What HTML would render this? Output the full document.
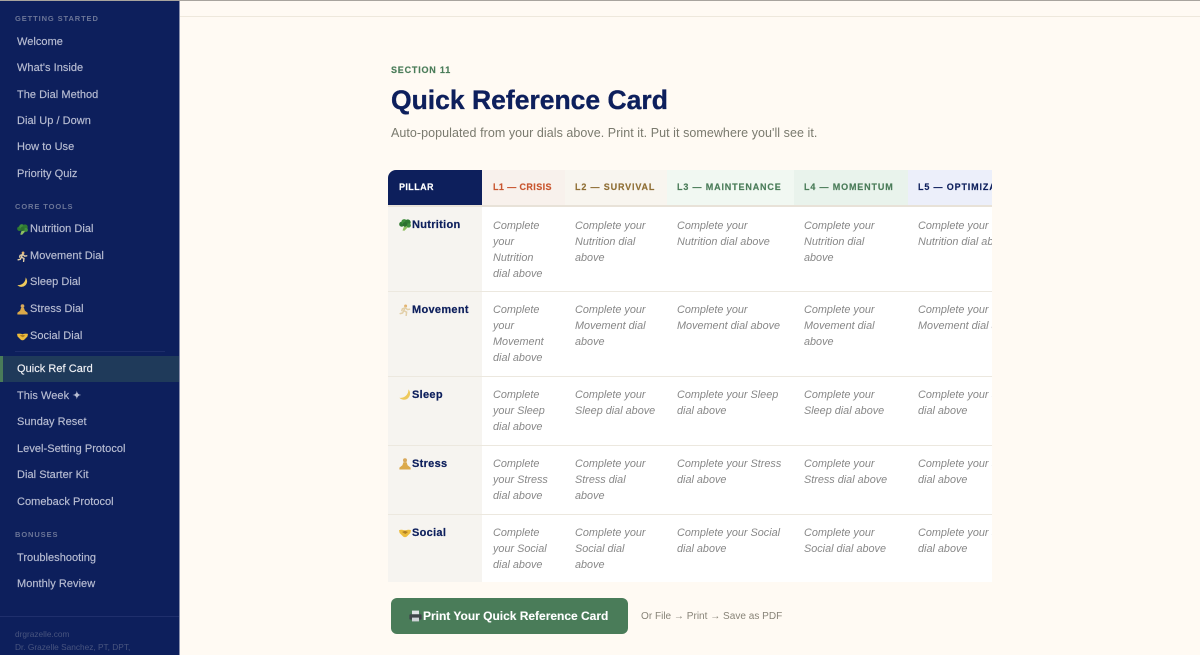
<!DOCTYPE html>
<html lang="en"><head><meta charset="utf-8"><title>Quick Reference Card</title>
<style>
*{box-sizing:border-box;margin:0;padding:0}
html,body{width:1200px;height:655px;overflow:hidden;background:#fffaf3;font-family:"Liberation Sans",Arial,sans-serif}
svg{display:block;flex:none}
.side{position:absolute;left:0;top:0;width:180px;height:655px;background:#0d1f5c;border-right:1px solid #8a90ac;overflow:hidden}
.topline{position:absolute;left:0;top:0;width:1200px;height:1px;background:#a8a49e}
.topline2{position:absolute;left:180px;top:16px;width:1020px;height:1px;background:#eee8dc}
.lab{position:absolute;left:15px;font-size:7.5px;font-weight:700;letter-spacing:.9px;color:#6b7597;line-height:10px;white-space:nowrap}
.it{position:absolute;left:17px;font-size:11px;letter-spacing:.04px;color:#b9bed3;line-height:14px;white-space:nowrap;display:flex;align-items:center;-webkit-text-stroke:.15px #b9bed3}
.it svg{margin-right:2px}
.active{position:absolute;left:0;top:356px;width:179px;height:26px;background:#1f3a5a;border-left:3px solid #4a7c59}
.divd{position:absolute;left:15px;top:351px;width:150px;height:1px;background:#1d2d6a}
.fb{position:absolute;left:0;top:616px;width:179px;height:1px;background:#1f2f6c}
.ft{position:absolute;left:15px;font-size:8.3px;color:#49557f;line-height:12px;white-space:nowrap}
.sec{position:absolute;left:391px;top:65px;font-size:9px;font-weight:700;letter-spacing:.8px;color:#4a7c59;line-height:11px;white-space:nowrap;-webkit-text-stroke:.15px #4a7c59}
h1{position:absolute;left:391px;top:84px;font-size:26.5px;letter-spacing:0;line-height:32px;color:#0d1f5c;font-weight:700;white-space:nowrap;-webkit-text-stroke:.35px #0d1f5c}
.sub{position:absolute;left:391px;top:125px;font-size:12.5px;letter-spacing:.055px;line-height:16px;color:#7a7a6e;white-space:nowrap}
.wrap{position:absolute;left:388px;top:170px;width:604px;height:412px;overflow:hidden}
table{border-collapse:separate;border-spacing:0;table-layout:fixed;width:720px}
th{height:37px;font-size:9px;font-weight:700;letter-spacing:.85px;text-align:left;padding:0 0 1px 10px;border-bottom:2px solid #e8e2d8;white-space:nowrap;overflow:hidden;-webkit-text-stroke:.15px currentColor}
th.p{background:#0d1f5c;color:#fff;border-top-left-radius:8px;border-bottom-color:#e8e2d8;padding-left:11px;letter-spacing:.4px}
th.l1{padding-left:11px;letter-spacing:.4px}
td{background:#fff;vertical-align:top;padding:10px 0 10px 10px;font-size:10.85px;font-style:italic;line-height:16px;color:#888;border-bottom:1px solid #ece8df;white-space:nowrap;overflow:hidden}
tr.first td{padding-top:11px;padding-bottom:9px}
td:nth-child(2){padding-left:11px}
td.n,tr.first td.n{background:#f6f4f0;font-style:normal;font-weight:700;font-size:11px;letter-spacing:.3px;color:#0d1f5c;padding-left:11px;line-height:16px;padding-top:10px;-webkit-text-stroke:.2px #0d1f5c}
td.n span{display:flex;align-items:center;height:16px}
td.n svg{margin-right:1px}
tr:last-child td{border-bottom:none}
.btn{position:absolute;left:391px;top:598px;width:237px;height:36px;background:#4a7c59;border-radius:6px;color:#fff;font-size:12px;font-weight:700;letter-spacing:-.01px;display:flex;align-items:center;padding-left:18px;white-space:nowrap;-webkit-text-stroke:.1px #fff}
.btn svg{margin-right:1px}
.or{position:absolute;left:641px;top:610px;font-size:10.05px;color:#888478;line-height:14px;white-space:nowrap}
</style></head><body>
<svg width="0" height="0" style="position:absolute">
<symbol id="bro" viewBox="0 0 12 12"><path d="M3.500 11.500L5.500 6l3.500 2-3.500 3.800z" fill="#8fbf62"/><circle cx="2.700" cy="5.200" r="2.500" fill="#2f7a32"/><circle cx="5.200" cy="2.900" r="2.800" fill="#3f8f3c"/><circle cx="8.800" cy="3.300" r="2.900" fill="#2f7a32"/><circle cx="9.700" cy="6.400" r="2.200" fill="#3f8f3c"/><circle cx="6" cy="5.400" r="2.300" fill="#2c7030"/></symbol>
<symbol id="run" viewBox="0 0 12 12"><circle cx="6.600" cy="2" r="1.500" fill="#e3b36f"/><path d="M6.300 3.400L4.800 6.600 7.600 8.200l-.4 3.200M4.800 6.600L3.600 9 1.200 9.600M6.400 3.800l2 1.800 2.200-.4M6.200 3.800L3.400 4.800 2.800 6.600" fill="none" stroke="#e2cfa8" stroke-width="1.500" stroke-linecap="round"/></symbol>
<symbol id="moon" viewBox="0 0 12 12"><path d="M9.400.4A5.900 5.900 0 1 1 .4 8.800 8 8 0 0 0 9.400.4z" fill="#eec95c"/></symbol>
<symbol id="med" viewBox="0 0 12 12"><circle cx="6" cy="2.300" r="2" fill="#d8a95c"/><path d="M4.400 4.200h3.200l1 3 3 2.400v1.900H.4V9.600l3-2.400z" fill="#dba94a"/></symbol>
<symbol id="shk" viewBox="0 0 12 12"><path d="M0 3.200C2 2.400 4 3 6 3.400c2-.4 4-1 6-.2L11.400 6 8 9.400c-1.100 1-2.900 1-4 0L.6 6z" fill="#ecbc3d"/><path d="M3 5l3-1.200L9 5 6.400 7z" fill="#b07f22"/></symbol>
<symbol id="prn" viewBox="0 0 13 12"><rect x="3" y=".6" width="7" height="4.400" fill="#dfe2e5"/><rect x=".4" y="4.200" width="12.200" height="5.400" rx="1" fill="#3f444a"/><rect x="3" y="7.600" width="7" height="3.800" fill="#cfd3d7"/></symbol>
</svg>

<nav class="side">
<div class="lab" style="top:14px">GETTING STARTED</div>
<div class="it" style="top:35px">Welcome</div>
<div class="it" style="top:61px">What's Inside</div>
<div class="it" style="top:88px">The Dial Method</div>
<div class="it" style="top:114px">Dial Up / Down</div>
<div class="it" style="top:140px">How to Use</div>
<div class="it" style="top:167px">Priority Quiz</div>
<div class="lab" style="top:202px">CORE TOOLS</div>
<div class="it" style="top:222px"><svg width="11" height="11"><use href="#bro"/></svg>Nutrition Dial</div>
<div class="it" style="top:249px"><svg width="11" height="11"><use href="#run"/></svg>Movement Dial</div>
<div class="it" style="top:275px"><svg width="11" height="11"><use href="#moon"/></svg>Sleep Dial</div>
<div class="it" style="top:302px"><svg width="11" height="11"><use href="#med"/></svg>Stress Dial</div>
<div class="it" style="top:329px"><svg width="11" height="11"><use href="#shk"/></svg>Social Dial</div>
<div class="divd"></div>
<div class="active"></div>
<div class="it" style="top:362px;color:#f1f2f6;-webkit-text-stroke-color:#f1f2f6">Quick Ref Card</div>
<div class="it" style="top:389px">This Week ✦</div>
<div class="it" style="top:415px">Sunday Reset</div>
<div class="it" style="top:442px">Level-Setting Protocol</div>
<div class="it" style="top:468px">Dial Starter Kit</div>
<div class="it" style="top:495px">Comeback Protocol</div>
<div class="lab" style="top:530px">BONUSES</div>
<div class="it" style="top:551px">Troubleshooting</div>
<div class="it" style="top:577px">Monthly Review</div>
<div class="fb"></div>
<div class="ft" style="top:628px">drgrazelle.com</div>
<div class="ft" style="top:641px">Dr. Grazelle Sanchez, PT, DPT,</div>
</nav>
<div class="topline"></div><div class="topline2"></div>

<main>
<div class="sec">SECTION 11</div>
<h1>Quick Reference Card</h1>
<p class="sub">Auto-populated from your dials above. Print it. Put it somewhere you'll see it.</p>
<div class="wrap"><table>
<colgroup><col style="width:94px"><col style="width:83px"><col style="width:102px"><col style="width:127px"><col style="width:114px"><col style="width:200px"></colgroup>
<thead><tr>
<th class="p">PILLAR</th>
<th class="l1" style="background:#f8f1ec;color:#c8552e">L1 — CRISIS</th>
<th style="background:#f8f5ef;color:#8f6f35">L2 — SURVIVAL</th>
<th style="background:#f1f8f2;color:#4a7c59">L3 — MAINTENANCE</th>
<th style="background:#e9f3ec;color:#4a7c59">L4 — MOMENTUM</th>
<th style="background:#eceffa;color:#0d1f5c">L5 — OPTIMIZATION</th>
</tr></thead>
<tbody>
<tr class="first"><td class="n"><span><svg width="12" height="12"><use href="#bro"/></svg>Nutrition</span></td><td>Complete<br>your<br>Nutrition<br>dial above</td><td>Complete your<br>Nutrition dial<br>above</td><td>Complete your<br>Nutrition dial above</td><td>Complete your<br>Nutrition dial<br>above</td><td>Complete your<br>Nutrition dial above</td></tr>
<tr><td class="n"><span><svg width="12" height="12"><use href="#run"/></svg>Movement</span></td><td>Complete<br>your<br>Movement<br>dial above</td><td>Complete your<br>Movement dial<br>above</td><td>Complete your<br>Movement dial above</td><td>Complete your<br>Movement dial<br>above</td><td>Complete your<br>Movement dial above</td></tr>
<tr><td class="n"><span><svg width="12" height="12"><use href="#moon"/></svg>Sleep</span></td><td>Complete<br>your Sleep<br>dial above</td><td>Complete your<br>Sleep dial above</td><td>Complete your Sleep<br>dial above</td><td>Complete your<br>Sleep dial above</td><td>Complete your Sleep<br>dial above</td></tr>
<tr><td class="n"><span><svg width="12" height="12"><use href="#med"/></svg>Stress</span></td><td>Complete<br>your Stress<br>dial above</td><td>Complete your<br>Stress dial<br>above</td><td>Complete your Stress<br>dial above</td><td>Complete your<br>Stress dial above</td><td>Complete your Stress<br>dial above</td></tr>
<tr><td class="n"><span><svg width="12" height="12"><use href="#shk"/></svg>Social</span></td><td>Complete<br>your Social<br>dial above</td><td>Complete your<br>Social dial<br>above</td><td>Complete your Social<br>dial above</td><td>Complete your<br>Social dial above</td><td>Complete your Social<br>dial above</td></tr>
</tbody></table></div>
<div class="btn"><svg width="13" height="12"><use href="#prn"/></svg>Print Your Quick Reference Card</div>
<div class="or">Or File → Print → Save as PDF</div>
</main>
</body></html>
